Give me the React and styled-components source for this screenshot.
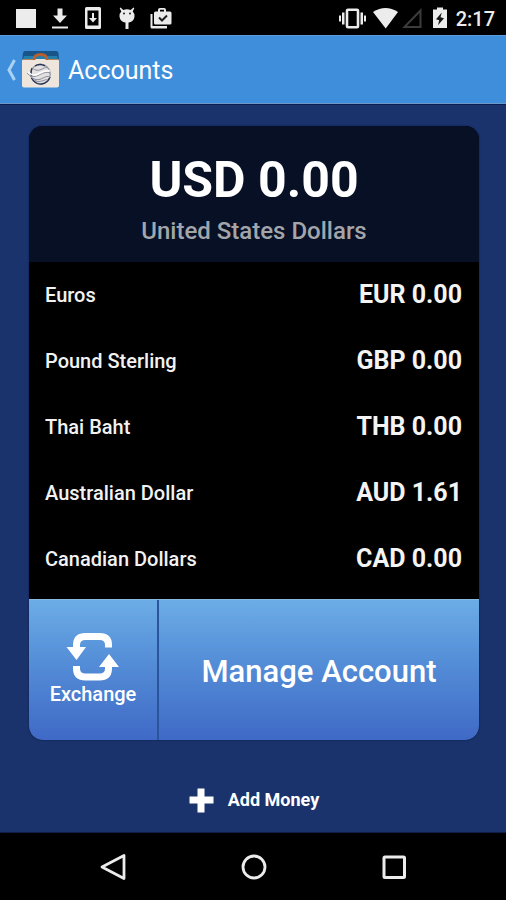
import React from "react";
import styled, { createGlobalStyle } from "styled-components";

const GlobalStyle = createGlobalStyle`
  *, *::before, *::after { box-sizing: border-box; }
  body { margin: 0; background: #000; font-family: Roboto, "Noto Sans", sans-serif; color: #fff; }
  button { font: inherit; color: inherit; border: 0; padding: 0; background: none; cursor: pointer; }
`;

const Screen = styled.div`
  display: flex;
  flex-direction: column;
  min-height: 100vh;
`;

const StatusBar = styled.div`
  display: flex;
  align-items: center;
  justify-content: space-between;
  height: 35px;
  padding: 0 11px 0 14px;
  background: #000;
`;

const IconGroup = styled.div`
  display: flex;
  align-items: center;
  gap: ${(p) => p.$gap}px;
`;

const Glyph = styled.svg`
  display: block;
  flex: none;
`;

const Clock = styled.time`
  font-size: 20px;
  line-height: 24px;
  padding-top: 2px;
  font-weight: 500;
  color: #ececec;
`;

const AppBar = styled.header`
  display: flex;
  align-items: center;
  height: 69px;
  padding: 0 6px;
  background: #3f8edb;
  border-top: 1px solid #5b9cdc;
  border-bottom: 1px solid #6b98c6;
`;

const BackButton = styled.button`
  display: flex;
  align-items: center;
  gap: 4px;
`;

const Title = styled.h1`
  margin: 0 0 0 9px;
  padding-top: 2px;
  font-size: 25px;
  line-height: 32px;
  font-weight: 400;
`;

const Main = styled.main`
  flex: 1;
  display: flex;
  flex-direction: column;
  padding: 21px 27px 0 29px;
  background: #1a336c;
  border-top: 1px solid #0b1f52;
  border-bottom: 1px solid #0e1f48;
`;

const Card = styled.section`
  border-radius: 14px;
  overflow: hidden;
  background: #000;
  box-shadow: 0 0 2px #0a1a4c;
`;

const Balance = styled.div`
  height: 136px;
  padding-top: 24px;
  text-align: center;
  background: #081026;
`;

const BalanceAmount = styled.h2`
  margin: 0;
  font-size: 50px;
  line-height: 60px;
  font-weight: 700;
`;

const BalanceName = styled.p`
  margin: 6px 0 0;
  font-size: 24px;
  line-height: 30px;
  font-weight: 500;
  color: #a2a6aa;
`;

const Currencies = styled.table`
  width: 100%;
  border-collapse: collapse;
  margin-bottom: 7px;
`;

const CurrencyRow = styled.tr`
  height: 66px;
`;

const CurrencyName = styled.th`
  padding: 0 0 0 16px;
  text-align: left;
  font-size: 20px;
  line-height: 24px;
  font-weight: 500;
  color: #f2f2f2;
`;

const CurrencyAmount = styled.td`
  padding: 0 17px 0 0;
  text-align: right;
  font-size: 25px;
  line-height: 32px;
  font-weight: 700;
  color: #f4f4f4;
`;

const Actions = styled.div`
  display: grid;
  grid-template-columns: 130px 1fr;
  height: 141px;
  background: linear-gradient(#6cade6, #558fd8 42%, #3f69c6);
  border-top: 1px solid #88b9e2;
`;

const ExchangeButton = styled.button`
  display: flex;
  flex-direction: column;
  align-items: center;
  justify-content: center;
  padding-bottom: 2px;
  border-right: 2px solid #2a559d;
  font-size: 20px;
  line-height: 22px;
  font-weight: 500;
`;

const ManageButton = styled.button`
  padding-top: 3px;
  font-size: 31px;
  line-height: 36px;
  font-weight: 500;
`;

const AddMoney = styled.button`
  display: flex;
  align-items: center;
  gap: 14px;
  align-self: center;
  margin-top: 45px;
  font-size: 18px;
  line-height: 30px;
  font-weight: 700;
`;

const NavBar = styled.nav`
  display: flex;
  justify-content: center;
  gap: 112px;
  height: 67px;
  padding-left: 2px;
`;

const NavButton = styled.button`
  display: grid;
  place-items: center;
  width: 28px;
`;

const currencies = [
  ["Euros", "EUR 0.00"],
  ["Pound Sterling", "GBP 0.00"],
  ["Thai Baht", "THB 0.00"],
  ["Australian Dollar", "AUD 1.61"],
  ["Canadian Dollars", "CAD 0.00"],
];

function Notifications() {
  return (
    <IconGroup $gap={10}>
      <Glyph width="24" height="24" fill="#ececec">
        <rect x="2" y="3" width="20" height="19" />
      </Glyph>
      <Glyph width="24" height="24" fill="#ececec">
        <path d="M9.500 2.500h5v7H19l-7 7.500-7-7.500h4.500zM4 20.500h16v2H4z" />
      </Glyph>
      <Glyph width="24" height="24" fill="#ececec">
        <path fillRule="evenodd" d="M4.500 1h13q1.500 0 1.500 1.500v19q0 1.500-1.500 1.500h-13Q3 23 3 21.500v-19Q3 1 4.500 1zM5.500 4.500v15h11v-15z" />
        <path d="M10 7h2v5h3l-4 4.500-4-4.500h3z" />
      </Glyph>
      <Glyph width="24" height="24" fill="#ececec">
        <path d="M4.500 1.500l2.800 2.500Q11 2.500 14.700 4L17.500 1.500l.8.800-1.600 3.200Q18.500 7 18.500 10.500q-.5 5-5.500 6h-.5V23h-3v-6.500H9q-5-1-5.500-6 0-3.500 1.800-5L3.700 2.300z" />
        <circle cx="8" cy="7.500" r="1" fill="#222" />
        <circle cx="14" cy="7.500" r="1" fill="#222" />
      </Glyph>
      <Glyph width="24" height="24" fill="#ececec">
        <path d="M0.500 8h2v12H17v2.500H2Q.5 22.500.5 21z" />
        <path fillRule="evenodd" d="M8 5.500V4q0-2 2-2h4q2 0 2 2v1.500h4q1.500 0 1.500 1.500v10q0 1.500-1.500 1.500H5.500Q4 18.500 4 17V7q0-1.500 1.500-1.500zm2 0h4V3.800h-4z" />
        <path d="M9 11.500l3 3 5-5" fill="none" stroke="#222" strokeWidth="2" />
      </Glyph>
    </IconGroup>
  );
}

function SystemStatus() {
  return (
    <IconGroup $gap={4}>
      <Glyph width="28" height="24" fill="#ececec">
        <path d="M1 9.500h2v6H1zM4 6.500h2.500v12H4zM22.500 6.500H25v12h-2.500zM26 9.500h2v6h-2z" />
        <rect x="9" y="3.700" width="11" height="17.600" rx="1" fill="none" stroke="#ececec" strokeWidth="2.600" />
      </Glyph>
      <Glyph width="28" height="24" fill="#ececec">
        <path d="M3 6Q15.500 -2 28 6L15.700 22.500z" />
      </Glyph>
      <Glyph width="20" height="24">
        <path d="M2.500 21L18.500 4.500V21z" fill="none" stroke="#3c3c3c" strokeWidth="2" />
      </Glyph>
      <Glyph width="26" height="24" fill="#ececec">
        <path d="M11 1.500h6v2h4V22H7V3.500h4z" />
        <path d="M15.800 6.500l-5.800 6.800 3.200 1-1.200 5 6-7-3.500-1z" fill="#151515" />
      </Glyph>
      <Clock>2:17</Clock>
    </IconGroup>
  );
}

function BagLogo() {
  return (
    <Glyph width="37" height="37" viewBox="0 0 37 37">
      <path d="M3 0h31q2 0 2.500 2L37 10H0L1 2q.4-2 2-2z" fill="#185487" />
      <path d="M2 5h33l1.500 5H.5z" fill="#2380ad" />
      <rect y="8" width="37" height="28.500" rx="2" fill="#eee6dd" />
      <path d="M1 8.500h11M25 8.500h11" stroke="#b88357" />
      <path d="M12 9q0-5.500 6.500-5.500T25 9" fill="none" stroke="#b65f32" strokeWidth="2.800" />
      <circle cx="18.500" cy="23" r="9.800" fill="#e4e0df" stroke="#9294a2" strokeWidth="1.200" />
      <path d="M9.500 27q4 7 10.500 6 6-1 8-7M10 17q-2 5 0 8M13 15q5-3 10 0" fill="none" stroke="#273353" strokeWidth="1.400" />
      <path d="M5 22q5 6 12 2t11-2M10 17q5 4 10 1t7 0M8 25q6 6 12 2.500t8-1M12 29q4 3 8 1t6-1" fill="none" stroke="#8990a0" strokeWidth="1" />
      <path d="M6 21q5 5 11 1.500T28 20" fill="none" stroke="#fff" strokeWidth="1.500" />
    </Glyph>
  );
}

export default function App() {
  return (
    <>
      <GlobalStyle />
      <Screen>
        <StatusBar>
          <Notifications />
          <SystemStatus />
        </StatusBar>
        <AppBar>
          <BackButton aria-label="Back">
            <Glyph width="12" height="24">
              <path d="M8.500 2L3 12l5.500 10" fill="none" stroke="#a9d2f5" strokeWidth="3" />
            </Glyph>
            <BagLogo />
          </BackButton>
          <Title>Accounts</Title>
        </AppBar>
        <Main>
          <Card>
            <Balance>
              <BalanceAmount>USD 0.00</BalanceAmount>
              <BalanceName>United States Dollars</BalanceName>
            </Balance>
            <Currencies>
              <tbody>
                {currencies.map(([name, amount]) => (
                  <CurrencyRow key={name}>
                    <CurrencyName scope="row">{name}</CurrencyName>
                    <CurrencyAmount>{amount}</CurrencyAmount>
                  </CurrencyRow>
                ))}
              </tbody>
            </Currencies>
            <Actions>
              <ExchangeButton>
                <Glyph width="54" height="50" fill="none" stroke="#fff" strokeWidth="7">
                  <path d="M10.500 15v-3q0-8.500 9-8.500h14q9 0 9 8.500v2.500" />
                  <path d="M10.500 33v2.500q0 8.500 9 8.500h14q9 0 9-8.500V31" />
                  <path d="M0.500 14h19.500l-9.500 13zM53 34H33l10-13z" fill="#fff" stroke="none" />
                </Glyph>
                Exchange
              </ExchangeButton>
              <ManageButton>Manage Account</ManageButton>
            </Actions>
          </Card>
          <AddMoney>
            <Glyph width="25" height="25" fill="#fff">
              <path d="M8.500 0.500h7v8h9v7h-9v9h-7v-9h-8v-7h8z" />
            </Glyph>
            Add Money
          </AddMoney>
        </Main>
        <NavBar>
          <NavButton aria-label="Back">
            <Glyph width="28" height="28" fill="none" stroke="#ececec" strokeWidth="2.800" strokeLinejoin="round">
              <path d="M24 2.500v23L2 14z" />
            </Glyph>
          </NavButton>
          <NavButton aria-label="Home">
            <Glyph width="28" height="28" fill="none" stroke="#ececec" strokeWidth="2.800">
              <circle cx="14" cy="14" r="11" />
            </Glyph>
          </NavButton>
          <NavButton aria-label="Recent apps">
            <Glyph width="28" height="28" fill="none" stroke="#ececec" strokeWidth="3">
              <rect x="4" y="4" width="20.500" height="20.500" rx="1" />
            </Glyph>
          </NavButton>
        </NavBar>
      </Screen>
    </>
  );
}
